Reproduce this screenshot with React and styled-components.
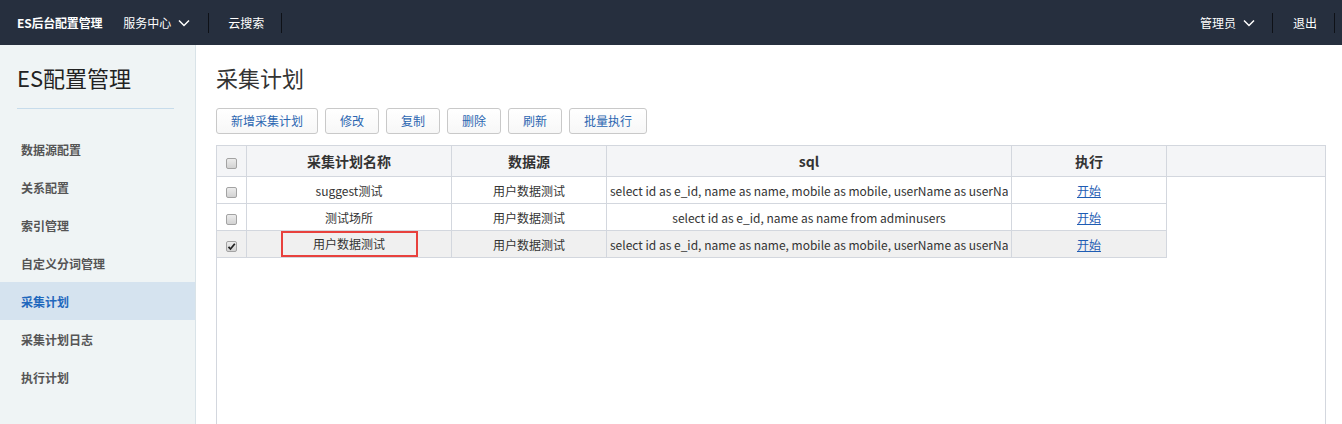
import styled, { createGlobalStyle } from "styled-components"

const GlobalStyle = createGlobalStyle`
    html, body {
        margin: 0;
        padding: 0;
        background: #fff;
        font-family: "Noto Sans CJK SC", "Open Sans", sans-serif;
        color: #333;
    }
`

const Page = styled.div`
    height: 100vh;
    display: flex;
    flex-direction: column;
    overflow: hidden;
`

const TopBar = styled.header`
    height: 45px;
    flex: none;
    background: #262f3e;
    display: flex;
    align-items: center;
    justify-content: space-between;
    padding: 0 7px 0 17px;
    color: #fff;
    font-size: 12px;
`

const BarGroup = styled.div`
    display: flex;
    align-items: center;
    height: 100%;
`

const Brand = styled.div`
    font-weight: bold;
    font-size: 12px;
    letter-spacing: -0.2px;
    margin-right: 2px;
`

const BarItem = styled.div`
    position: relative;
    display: flex;
    align-items: center;
    gap: 7px;
    padding: 0 ${p => (p.$tight ? 18 : 19)}px 0 ${p => (p.$wide ? 20 : 19)}px;
    height: 100%;
    &::after {
        content: "";
        display: ${p => (p.$divider ? "block" : "none")};
        position: absolute;
        right: 0;
        top: 13px;
        height: 20px;
        width: 1px;
        background: #0e1117;
    }
`

const Chevron = () => (
    <svg width="12" height="8" viewBox="0 0 12 8">
        <polyline points="1,1.5 6,6.5 11,1.5" fill="none" stroke="#fff" strokeWidth="1.5" />
    </svg>
)

const Body = styled.div`
    flex: 1;
    display: flex;
    min-height: 0;
`

const Sidebar = styled.aside`
    width: 195px;
    flex: none;
    background: #eff4f5;
    border-right: 1px solid #d9e3e8;
`

const SideTitle = styled.div`
    margin: 0 21px 0 17px;
    padding-top: 17px;
    height: 46px;
    font-size: 22px;
    line-height: 30px;
    color: #222;
    border-bottom: 1px solid #c7dceb;
`

const NavList = styled.nav`
    margin-top: 21px;
`

const NavItem = styled.div`
    height: 38px;
    line-height: 40px;
    padding-left: 21px;
    font-size: 12px;
    font-weight: 600;
    color: ${p => (p.$active ? "#1f68bd" : "#555")};
    background: ${p => (p.$active ? "#d5e3ef" : "transparent")};
`

const Main = styled.main`
    flex: 1;
    min-width: 0;
    padding: 17px 16px 0 20px;
    display: flex;
    flex-direction: column;
`

const Title = styled.h1`
    margin: 0;
    font-size: 22px;
    font-weight: normal;
    line-height: 30px;
    color: #333;
`

const Toolbar = styled.div`
    display: flex;
    gap: 7px;
    margin-top: 16px;
`

const Button = styled.button`
    height: 26px;
    padding: 0 14px;
    border: 1px solid #c9c9c9;
    border-radius: 3px;
    background: linear-gradient(#ffffff, #f7f7f7);
    color: #2b66b1;
    font-family: inherit;
    font-size: 12px;
    line-height: 24px;
    cursor: pointer;
`

const Grid = styled.div`
    margin-top: 11px;
    flex: 1;
    border: 1px solid #d3d7de;
    border-bottom: none;
`

const Table = styled.table`
    border-collapse: separate;
    border-spacing: 0;
    table-layout: fixed;
    width: ${p => p.$width || "100%"};
`

const Th = styled.th`
    box-sizing: border-box;
    width: ${p => (p.$w ? p.$w + "px" : "auto")};
    height: 31px;
    padding: 0;
    background: #f4f5f7;
    border-bottom: 1px solid #d3d7de;
    border-right: ${p => (p.$last ? "none" : "1px solid #d3d7de")};
    font-size: 14px;
    font-weight: bold;
    color: #333;
    text-align: center;
`

const Td = styled.td`
    box-sizing: border-box;
    width: ${p => p.$w}px;
    height: 27px;
    padding: 0 3px;
    border-bottom: 1px solid #d3d7de;
    border-right: 1px solid #d3d7de;
    font-size: 12px;
    color: #333;
    text-align: center;
`

const Clip = styled.div`
    white-space: nowrap;
    overflow: hidden;
    text-overflow: clip;
`

const Row = styled.tr`
    background: ${p => (p.$selected ? "#f0f0f0" : "#fff")};
`

const Box = styled.span`
    display: inline-block;
    box-sizing: border-box;
    width: 11px;
    height: 11px;
    border: 1px solid #a3a3a3;
    border-radius: 2px;
    background: linear-gradient(#ececec, #d2d2d2);
    vertical-align: middle;
    position: relative;
    svg {
        position: absolute;
        left: 0;
        top: 0;
    }
`

const CheckBox = ({ checked }) => (
    <Box>
        {checked && (
            <svg width="9" height="9" viewBox="0 0 9 9">
                <path d="M1.5 4.8 L3.5 7 L7.8 1.8" fill="none" stroke="#222" strokeWidth="1.8" />
            </svg>
        )}
    </Box>
)

const Marked = styled.span`
    display: block;
    box-sizing: border-box;
    width: 137px;
    height: 26px;
    margin: 0 auto;
    border: 2px solid #e8413d;
    line-height: 22px;
`

const StartLink = styled.a`
    color: #1e5cb3;
    text-decoration: underline;
    cursor: pointer;
`

const cols = [30, 205, 155, 405, 155]

const rows = [
    {
        name: "suggest测试",
        source: "用户数据测试",
        sql: "select id as e_id, name as name, mobile as mobile, userName as userName",
    },
    {
        name: "测试场所",
        source: "用户数据测试",
        sql: "select id as e_id, name as name from adminusers",
    },
    {
        name: "用户数据测试",
        source: "用户数据测试",
        sql: "select id as e_id, name as name, mobile as mobile, userName as userName",
        selected: true,
    },
]

const navItems = ["数据源配置", "关系配置", "索引管理", "自定义分词管理", "采集计划", "采集计划日志", "执行计划"]

const App = () => {
    return (
        <Page>
            <GlobalStyle />
            <TopBar>
                <BarGroup>
                    <Brand>ES后台配置管理</Brand>
                    <BarItem $divider>
                        服务中心 <Chevron />
                    </BarItem>
                    <BarItem $divider $tight>云搜索</BarItem>
                </BarGroup>
                <BarGroup>
                    <BarItem $divider $tight>
                        管理员 <Chevron />
                    </BarItem>
                    <BarItem $divider $tight $wide>退出</BarItem>
                </BarGroup>
            </TopBar>
            <Body>
                <Sidebar>
                    <SideTitle>ES配置管理</SideTitle>
                    <NavList>
                        {navItems.map(item => (
                            <NavItem key={item} $active={item === "采集计划"}>
                                {item}
                            </NavItem>
                        ))}
                    </NavList>
                </Sidebar>
                <Main>
                    <Title>采集计划</Title>
                    <Toolbar>
                        <Button>新增采集计划</Button>
                        <Button>修改</Button>
                        <Button>复制</Button>
                        <Button>删除</Button>
                        <Button>刷新</Button>
                        <Button>批量执行</Button>
                    </Toolbar>
                    <Grid>
                        <Table>
                            <thead>
                                <tr>
                                    <Th $w={cols[0]}>
                                        <CheckBox />
                                    </Th>
                                    <Th $w={cols[1]}>采集计划名称</Th>
                                    <Th $w={cols[2]}>数据源</Th>
                                    <Th $w={cols[3]}>sql</Th>
                                    <Th $w={cols[4]}>执行</Th>
                                    <Th $last />
                                </tr>
                            </thead>
                        </Table>
                        <Table $width="950px">
                            <tbody>
                                {rows.map(r => (
                                    <Row key={r.name} $selected={r.selected}>
                                        <Td $w={cols[0]}>
                                            <CheckBox checked={r.selected} />
                                        </Td>
                                        <Td $w={cols[1]}>
                                            {r.selected ? <Marked>{r.name}</Marked> : r.name}
                                        </Td>
                                        <Td $w={cols[2]}>{r.source}</Td>
                                        <Td $w={cols[3]}>
                                            <Clip>{r.sql}</Clip>
                                        </Td>
                                        <Td $w={cols[4]}>
                                            <StartLink>开始</StartLink>
                                        </Td>
                                    </Row>
                                ))}
                            </tbody>
                        </Table>
                    </Grid>
                </Main>
            </Body>
        </Page>
    )
}

export default App
